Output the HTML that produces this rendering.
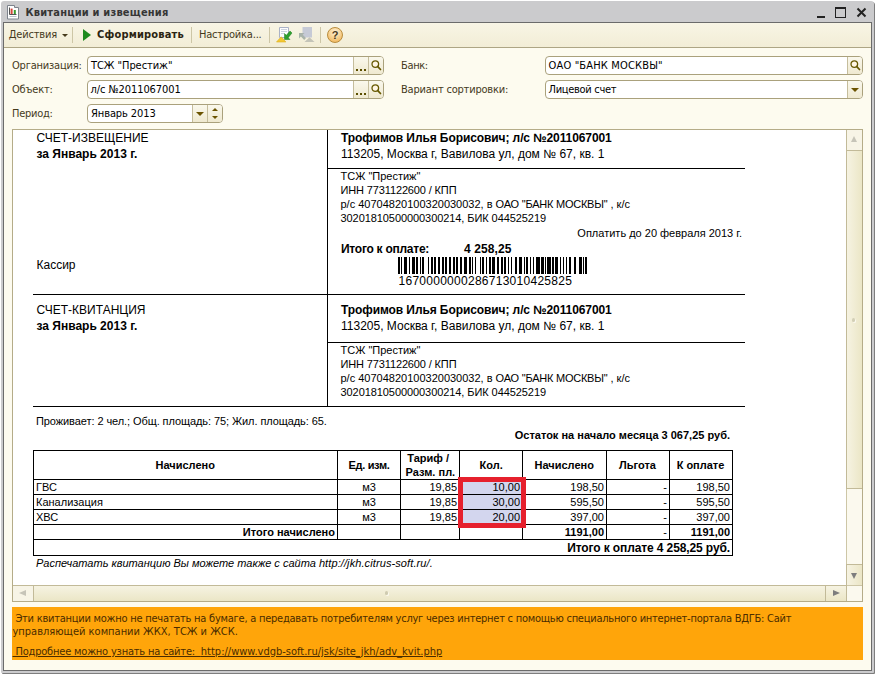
<!DOCTYPE html>
<html lang="ru"><head><meta charset="utf-8"><title>Квитанции и извещения</title>
<style>
*{box-sizing:border-box;margin:0;padding:0}
html,body{width:875px;height:674px;background:#fff;overflow:hidden}
body{position:relative;font-family:"Liberation Sans","DejaVu Sans",sans-serif;font-size:11px;color:#000}
.abs,.win *{position:absolute}
.win{position:absolute;left:1px;top:1px;width:873px;height:672px;background:#cbcbcd;border-radius:3px 3px 1px 1px;box-shadow:1px 1px 0 #7e7e7e}
.inner{left:2px;top:21px;width:869px;height:649px;border:1px solid #6b6b6b;background:#fdfbef}
.title{left:24.500px;top:5px;font-weight:bold;font-size:11px;line-height:14px;color:#363636;white-space:nowrap;letter-spacing:.19px}
.tb{left:0;top:0;width:867px;height:25px;background:linear-gradient(#f8f5e5,#f2edd6);border-bottom:1px solid #ada584}
.ui,.title,.inp .v{font-family:"DejaVu Sans Condensed","Liberation Sans",sans-serif}
.ui{font-size:11px;line-height:14px;color:#453a1c;white-space:nowrap;letter-spacing:-.2px}
.sep{width:1px;background:#cdc6a6;top:4px;height:16px}
.inp{height:19px;border:1px solid #aaa17c;border-radius:4px;background:#fff;overflow:hidden}
.inp .v{left:3px;top:2px;font-size:11px;line-height:14px;color:#000;white-space:nowrap}
.btn{top:0;height:17px;width:15px;border-left:1px solid #c5bd9c;background:linear-gradient(#faf8ec,#efe9d0)}
.doc{left:8px;top:106px;width:851px;height:473px;border:1px solid #b5ac88;background:#fff;overflow:hidden}
.d{white-space:nowrap;color:#000;font-size:12px;line-height:14px}
.s{font-size:11px;line-height:13px}
.b{font-weight:bold}
.ln{background:#000}
.r{text-align:right}
.c{text-align:center}
</style></head><body>
<div class="win">
 <svg style="left:6px;top:4px" width="13" height="15" viewBox="0 0 13 15"><path d="M.5.5h7v2h4v11.5h-11z" fill="#fff" stroke="#7d838c"/><path d="M2.5 2.5v7h7" fill="none" stroke="#555"/><rect x="3.6" y="3.6" width="2" height="5.4" fill="#d4463a"/><rect x="6.8" y="5" width="2" height="4" fill="#3a9a2e"/><path d="M2.5 11.5h7" stroke="#b8c0c8"/></svg>
 <div class="title">Квитанции и извещения</div>
 <div class="ln" style="left:816px;top:15px;width:8px;height:2px;background:#222"></div>
 <div style="left:834px;top:6px;width:11px;height:11px;border:1px solid #222;border-top-width:2px"></div>
 <svg style="left:855px;top:6px" width="11" height="11" viewBox="0 0 11 11"><path d="M1.5 1.5l8 8M9.500 1.5l-8 8" stroke="#222" stroke-width="2"/></svg>
 <div class="inner">
  <div class="tb">
   <div class="ui" style="left:4.700px;top:5px;letter-spacing:-.16px">Действия</div>
   <div style="left:58px;top:11px;border:3px solid transparent;border-top:3px solid #453a1c;border-bottom:0"></div>
   <div class="sep" style="left:68px"></div>
   <div style="left:79px;top:6px;border:6px solid transparent;border-left:8px solid #1e8a1e;border-right:0"></div>
   <div class="ui b" style="left:93px;top:5px;color:#2b2412;letter-spacing:.17px">Сформировать</div>
   <div class="sep" style="left:187px"></div>
   <div class="ui" style="left:195px;top:5px">Настройка...</div>
   <div class="sep" style="left:265px"></div>
   <svg style="left:272px;top:3px" width="18" height="18" viewBox="0 0 18 18"><path d="M3.5 1.500h9v10h-9z" fill="#fdfdfe" stroke="#aab2c6"/><path d="M5 3.500h6M5 5.500h6M5 7.500h3" stroke="#ccd3e0"/><path d="M8.500 13.500V7.500l1.800 1.800L14 5l2 2-3.800 4.700 1.800 1.800z" fill="#2fa02f" stroke="#1c7d1c" stroke-width=".5"/><path d="M0.500 16l4.700-5.200 4.700 5.200z" fill="#f4c832" stroke="#dcae20" stroke-width=".6"/></svg>
   <svg style="left:294px;top:3px" width="18" height="18" viewBox="0 0 18 18"><path d="M4.500 1h9.500v10.500h-9.500z" fill="#c6cad6"/><path d="M1 7h5.500l-1.800 1.800 3.300 3.300-1.800 1.800-3.300-3.300-1.900 1.900z" fill="#a9b3aa"/><path d="M6.500 16l5-4.800 5 4.800z" fill="#c4c4b8"/></svg>
   <div class="sep" style="left:316px"></div>
   <div style="left:323px;top:4px;width:16px;height:16px;border-radius:8px;border:1px solid #b98c3c;background:radial-gradient(circle at 50% 30%,#fff3d8,#f3bf6c 75%)"></div>
   <div style="left:323px;top:4px;width:16px;height:16px;text-align:center;font-weight:bold;font-size:11px;line-height:16px;color:#4a3a20">?</div>
  </div>

  <div class="ui" style="left:8px;top:36px">Организация:</div>
  <div class="inp" style="left:83px;top:33px;width:297px"><div class="v" style="letter-spacing:-.06px">ТСЖ "Престиж"</div>
    <div class="btn" style="left:265px"><i style="left:2px;top:12px;width:2px;height:2px;background:#5b4e00"></i><i style="left:6px;top:12px;width:2px;height:2px;background:#5b4e00"></i><i style="left:10px;top:12px;width:2px;height:2px;background:#5b4e00"></i></div>
    <div class="btn" style="left:280px"><svg style="left:1px;top:2px" width="13" height="13" viewBox="0 0 13 13"><circle cx="5.300" cy="5.100" r="3.300" fill="#fff6e4" stroke="#665800" stroke-width="1.300"/><path d="M7.800 7.700l2.700 2.800" stroke="#665800" stroke-width="1.700" stroke-linecap="round"/></svg></div>
  </div>
  <div class="ui" style="left:8px;top:60px">Объект:</div>
  <div class="inp" style="left:83px;top:57px;width:297px"><div class="v" style="letter-spacing:-.09px;left:2.500px">л/с №2011067001</div>
    <div class="btn" style="left:265px"><i style="left:2px;top:12px;width:2px;height:2px;background:#5b4e00"></i><i style="left:6px;top:12px;width:2px;height:2px;background:#5b4e00"></i><i style="left:10px;top:12px;width:2px;height:2px;background:#5b4e00"></i></div>
    <div class="btn" style="left:280px"><svg style="left:1px;top:2px" width="13" height="13" viewBox="0 0 13 13"><circle cx="5.300" cy="5.100" r="3.300" fill="#fff6e4" stroke="#665800" stroke-width="1.300"/><path d="M7.800 7.700l2.700 2.800" stroke="#665800" stroke-width="1.700" stroke-linecap="round"/></svg></div>
  </div>
  <div class="ui" style="left:8px;top:84px;letter-spacing:-.28px">Период:</div>
  <div class="inp" style="left:83px;top:81px;width:136px"><div class="v" style="letter-spacing:-.1px">Январь 2013</div>
    <div class="btn" style="left:104px"><i style="left:3px;top:7px;border:4px solid transparent;border-top:4px solid #6b5300;border-bottom:0"></i></div>
    <div class="btn" style="left:119px"><i style="left:4px;top:3px;border:3px solid transparent;border-bottom:3px solid #6b5300;border-top:0"></i><i style="left:4px;top:11px;border:3px solid transparent;border-top:3px solid #6b5300;border-bottom:0"></i></div>
  </div>

  <div class="ui" style="left:397px;top:36px;letter-spacing:-.36px">Банк:</div>
  <div class="inp" style="left:541px;top:33px;width:318px"><div class="v" style="letter-spacing:.16px;left:2.500px">ОАО "БАНК МОСКВЫ"</div>
    <div class="btn" style="left:301px"><svg style="left:1px;top:2px" width="13" height="13" viewBox="0 0 13 13"><circle cx="5.300" cy="5.100" r="3.300" fill="#fff6e4" stroke="#665800" stroke-width="1.300"/><path d="M7.800 7.700l2.700 2.800" stroke="#665800" stroke-width="1.700" stroke-linecap="round"/></svg></div>
  </div>
  <div class="ui" style="left:397px;top:60px">Вариант сортировки:</div>
  <div class="inp" style="left:541px;top:57px;width:318px"><div class="v" style="letter-spacing:-.29px;left:2.500px">Лицевой счет</div>
    <div class="btn" style="left:301px"><i style="left:3px;top:7px;border:4px solid transparent;border-top:4px solid #6b5300;border-bottom:0"></i></div>
  </div>

  <div class="doc">
   <div class="ln" style="left:314px;top:0px;width:1px;height:277px;background:#000"></div>
<div class="ln" style="left:314px;top:38px;width:418px;height:1px;background:#000"></div>
<div class="ln" style="left:20px;top:164px;width:712px;height:1px;background:#000"></div>
<div class="ln" style="left:314px;top:212px;width:418px;height:1px;background:#000"></div>
<div class="ln" style="left:20px;top:276px;width:712px;height:1px;background:#000"></div>
<div class="d" style="top:0.84px;font-size:12px;line-height:14px;left:23.50px;">СЧЕТ-ИЗВЕЩЕНИЕ</div>
<div class="d" style="top:16.84px;font-size:12px;line-height:14px;font-weight:bold;left:23.50px;">за Январь 2013 г.</div>
<div class="d" style="top:127.84px;font-size:12px;line-height:14px;left:23.50px;">Кассир</div>
<div class="d" style="top:0.84px;font-size:12px;line-height:14px;font-weight:bold;left:328.00px;letter-spacing:-.09px;">Трофимов Илья Борисович; л/с №2011067001</div>
<div class="d" style="top:16.84px;font-size:12px;line-height:14px;left:328.00px;">113205, Москва г, Вавилова ул, дом № 67, кв. 1</div>
<div class="d" style="top:39.69px;font-size:11px;line-height:13px;left:327.50px;">ТСЖ "Престиж"</div>
<div class="d" style="top:53.69px;font-size:11px;line-height:13px;left:327.50px;letter-spacing:-.135px;">ИНН 7731122600 / КПП</div>
<div class="d" style="top:67.69px;font-size:11px;line-height:13px;left:327.50px;">р/с 40704820100320030032, в <span style="position:static;letter-spacing:-.23px">ОАО "БАНК МОСКВЫ"</span> , к/с</div>
<div class="d" style="top:81.69px;font-size:11px;line-height:13px;left:327.50px;letter-spacing:-.075px;">30201810500000300214, БИК 044525219</div>
<div class="d" style="top:96.69px;font-size:11px;line-height:13px;right:120.00px;text-align:right;">Оплатить до 20 февраля 2013 г.</div>
<div class="d" style="top:111.84px;font-size:12px;line-height:14px;font-weight:bold;left:328.00px;letter-spacing:-.26px;">Итого к оплате:</div>
<div class="d" style="top:111.84px;font-size:12px;line-height:14px;font-weight:bold;left:451.00px;letter-spacing:.1px;">4 258,25</div>
<svg style="left:385px;top:127px" width="189" height="17" viewBox="0 0 189 18" preserveAspectRatio="none"><path fill="#000" d="M0 0h2v18h-2zM3 0h1v18h-1zM6 0h3v18h-3zM11 0h1v18h-1zM14 0h3v18h-3zM18 0h2v18h-2zM22 0h1v18h-1zM24 0h2v18h-2zM30 0h1v18h-1zM33 0h2v18h-2zM36 0h2v18h-2zM40 0h2v18h-2zM44 0h2v18h-2zM47 0h2v18h-2zM51 0h2v18h-2zM55 0h2v18h-2zM58 0h2v18h-2zM62 0h2v18h-2zM66 0h3v18h-3zM71 0h2v18h-2zM74 0h1v18h-1zM77 0h1v18h-1zM82 0h1v18h-1zM84 0h2v18h-2zM88 0h1v18h-1zM91 0h2v18h-2zM94 0h3v18h-3zM99 0h2v18h-2zM103 0h2v18h-2zM106 0h2v18h-2zM110 0h1v18h-1zM113 0h1v18h-1zM117 0h2v18h-2zM121 0h3v18h-3zM126 0h1v18h-1zM128 0h2v18h-2zM132 0h1v18h-1zM135 0h1v18h-1zM138 0h4v18h-4zM143 0h3v18h-3zM147 0h1v18h-1zM149 0h4v18h-4zM154 0h2v18h-2zM157 0h3v18h-3zM162 0h1v18h-1zM165 0h1v18h-1zM168 0h1v18h-1zM171 0h2v18h-2zM176 0h2v18h-2zM181 0h3v18h-3zM185 0h1v18h-1zM187 0h2v18h-2z"/></svg>
<div class="d" style="top:143.84px;font-size:12px;line-height:14px;left:385.50px;letter-spacing:.27px;">1670000000286713010425825</div>
<div class="d" style="top:172.84px;font-size:12px;line-height:14px;left:23.50px;">СЧЕТ-КВИТАНЦИЯ</div>
<div class="d" style="top:188.84px;font-size:12px;line-height:14px;font-weight:bold;left:23.50px;">за Январь 2013 г.</div>
<div class="d" style="top:172.84px;font-size:12px;line-height:14px;font-weight:bold;left:328.00px;letter-spacing:-.09px;">Трофимов Илья Борисович; л/с №2011067001</div>
<div class="d" style="top:188.84px;font-size:12px;line-height:14px;left:328.00px;">113205, Москва г, Вавилова ул, дом № 67, кв. 1</div>
<div class="d" style="top:213.69px;font-size:11px;line-height:13px;left:327.50px;">ТСЖ "Престиж"</div>
<div class="d" style="top:227.69px;font-size:11px;line-height:13px;left:327.50px;letter-spacing:-.135px;">ИНН 7731122600 / КПП</div>
<div class="d" style="top:241.69px;font-size:11px;line-height:13px;left:327.50px;">р/с 40704820100320030032, в <span style="position:static;letter-spacing:-.23px">ОАО "БАНК МОСКВЫ"</span> , к/с</div>
<div class="d" style="top:255.69px;font-size:11px;line-height:13px;left:327.50px;letter-spacing:-.075px;">30201810500000300214, БИК 044525219</div>
<div class="d" style="top:284.69px;font-size:11px;line-height:13px;left:23.00px;letter-spacing:-.08px;">Проживает: 2 чел.; Общ. площадь: 75; Жил. площадь: 65.</div>
<div class="d" style="top:298.69px;font-size:11px;line-height:13px;font-weight:bold;right:132.00px;text-align:right;">Остаток на начало месяца 3 067,25 руб.</div>
<div style="left:447px;top:350px;width:62px;height:44px;background:#d3d6ee"></div>
<div class="ln" style="left:20px;top:320px;width:700px;height:1px;background:#000"></div>
<div class="ln" style="left:20px;top:349px;width:700px;height:1px;background:#000"></div>
<div class="ln" style="left:20px;top:364px;width:700px;height:1px;background:#000"></div>
<div class="ln" style="left:20px;top:379px;width:700px;height:1px;background:#000"></div>
<div class="ln" style="left:20px;top:394px;width:700px;height:1px;background:#000"></div>
<div class="ln" style="left:20px;top:409px;width:700px;height:1px;background:#000"></div>
<div class="ln" style="left:20px;top:425px;width:700px;height:1px;background:#000"></div>
<div class="ln" style="left:20px;top:320px;width:1px;height:106px;background:#000"></div>
<div class="ln" style="left:324px;top:320px;width:1px;height:90px;background:#000"></div>
<div class="ln" style="left:387px;top:320px;width:1px;height:90px;background:#000"></div>
<div class="ln" style="left:446px;top:320px;width:1px;height:90px;background:#000"></div>
<div class="ln" style="left:509px;top:320px;width:1px;height:90px;background:#000"></div>
<div class="ln" style="left:593px;top:320px;width:1px;height:90px;background:#000"></div>
<div class="ln" style="left:656px;top:320px;width:1px;height:90px;background:#000"></div>
<div class="ln" style="left:719px;top:320px;width:1px;height:106px;background:#000"></div>
<div style="left:445px;top:347px;width:68px;height:51px;border:5px solid #e6202d"></div>
<div class="d" style="top:328.69px;font-size:11px;line-height:13px;font-weight:bold;left:72.20px;width:200px;text-align:center;">Начислено</div>
<div class="d" style="top:328.69px;font-size:11px;line-height:13px;font-weight:bold;left:256.00px;width:200px;text-align:center;letter-spacing:-.3px;">Ед. изм.</div>
<div class="d" style="top:321.69px;font-size:11px;line-height:13px;font-weight:bold;left:315.20px;width:200px;text-align:center;">Тариф /</div>
<div class="d" style="top:335.69px;font-size:11px;line-height:13px;font-weight:bold;left:317.40px;width:200px;text-align:center;">Разм. пл.</div>
<div class="d" style="top:328.69px;font-size:11px;line-height:13px;font-weight:bold;left:378.20px;width:200px;text-align:center;">Кол.</div>
<div class="d" style="top:328.69px;font-size:11px;line-height:13px;font-weight:bold;left:451.20px;width:200px;text-align:center;">Начислено</div>
<div class="d" style="top:328.69px;font-size:11px;line-height:13px;font-weight:bold;left:524.50px;width:200px;text-align:center;">Льгота</div>
<div class="d" style="top:328.69px;font-size:11px;line-height:13px;font-weight:bold;left:587.50px;width:200px;text-align:center;">К оплате</div>
<div class="d" style="top:350.69px;font-size:11px;line-height:13px;left:23.00px;">ГВС</div>
<div class="d" style="top:350.69px;font-size:11px;line-height:13px;left:256.00px;width:200px;text-align:center;">м3</div>
<div class="d" style="top:350.69px;font-size:11px;line-height:13px;right:405.00px;text-align:right;">19,85</div>
<div class="d" style="top:350.69px;font-size:11px;line-height:13px;right:342.00px;text-align:right;">10,00</div>
<div class="d" style="top:350.69px;font-size:11px;line-height:13px;right:258.00px;text-align:right;">198,50</div>
<div class="d" style="top:350.69px;font-size:11px;line-height:13px;right:195.00px;text-align:right;">-</div>
<div class="d" style="top:350.69px;font-size:11px;line-height:13px;right:132.00px;text-align:right;">198,50</div>
<div class="d" style="top:365.69px;font-size:11px;line-height:13px;left:23.00px;">Канализация</div>
<div class="d" style="top:365.69px;font-size:11px;line-height:13px;left:256.00px;width:200px;text-align:center;">м3</div>
<div class="d" style="top:365.69px;font-size:11px;line-height:13px;right:405.00px;text-align:right;">19,85</div>
<div class="d" style="top:365.69px;font-size:11px;line-height:13px;right:342.00px;text-align:right;">30,00</div>
<div class="d" style="top:365.69px;font-size:11px;line-height:13px;right:258.00px;text-align:right;">595,50</div>
<div class="d" style="top:365.69px;font-size:11px;line-height:13px;right:195.00px;text-align:right;">-</div>
<div class="d" style="top:365.69px;font-size:11px;line-height:13px;right:132.00px;text-align:right;">595,50</div>
<div class="d" style="top:380.69px;font-size:11px;line-height:13px;left:23.00px;">ХВС</div>
<div class="d" style="top:380.69px;font-size:11px;line-height:13px;left:256.00px;width:200px;text-align:center;">м3</div>
<div class="d" style="top:380.69px;font-size:11px;line-height:13px;right:405.00px;text-align:right;">19,85</div>
<div class="d" style="top:380.69px;font-size:11px;line-height:13px;right:342.00px;text-align:right;">20,00</div>
<div class="d" style="top:380.69px;font-size:11px;line-height:13px;right:258.00px;text-align:right;">397,00</div>
<div class="d" style="top:380.69px;font-size:11px;line-height:13px;right:195.00px;text-align:right;">-</div>
<div class="d" style="top:380.69px;font-size:11px;line-height:13px;right:132.00px;text-align:right;">397,00</div>
<div class="d" style="top:395.69px;font-size:11px;line-height:13px;font-weight:bold;right:527.00px;text-align:right;">Итого начислено</div>
<div class="d" style="top:395.69px;font-size:11px;line-height:13px;font-weight:bold;right:258.00px;text-align:right;">1191,00</div>
<div class="d" style="top:395.69px;font-size:11px;line-height:13px;right:195.00px;text-align:right;">-</div>
<div class="d" style="top:395.69px;font-size:11px;line-height:13px;font-weight:bold;right:132.00px;text-align:right;">1191,00</div>
<div class="d" style="top:410.84px;font-size:12px;line-height:14px;font-weight:bold;right:132.00px;text-align:right;letter-spacing:-.11px;">Итого к оплате 4 258,25 руб.</div>
<div class="d" style="top:426.69px;font-size:11px;line-height:13px;font-style:italic;left:23.00px;">Распечатать квитанцию Вы можете также с сайта <span style="position:static;letter-spacing:.1px">http://jkh.citrus-soft.ru/.</span></div>

<div style="left:833px;top:0;width:16px;height:455px;background:#fbf9ee;border-left:1px solid #cdc6a6"></div>
<div style="left:833px;top:0;width:16px;height:21px;background:#f7f4e6;border-left:1px solid #c2ba98;border-bottom:1px solid #c2ba98"></div>
<div style="left:838px;top:6px;border:3.500px solid transparent;border-bottom:6.500px solid #c6c4b8;border-top:0"></div>
<div style="left:833px;top:21px;width:16px;height:338px;background:linear-gradient(90deg,#f6f3e2,#ebe6c6);border-left:1px solid #c2ba98;border-bottom:1px solid #c2ba98"></div>
<div style="left:833px;top:434px;width:16px;height:21px;background:linear-gradient(90deg,#f6f3e2,#ebe6c6);border-left:1px solid #c2ba98;border-top:1px solid #c2ba98"></div>
<div style="left:837.500px;top:442.500px;border:3.500px solid transparent;border-top:6.500px solid #7d7d7d;border-bottom:0"></div>
<div style="left:0;top:455px;width:849px;height:16px;background:#fbf9ee;border-top:1px solid #cdc6a6"></div>
<div style="left:0;top:455px;width:21px;height:16px;background:#f7f4e6;border-top:1px solid #c2ba98;border-right:1px solid #c2ba98"></div>
<div style="left:6px;top:459.500px;border:3.500px solid transparent;border-right:7px solid #c6c4b8;border-left:0"></div>
<div style="left:21px;top:455px;width:792px;height:16px;background:linear-gradient(#f6f3e2,#ebe6c6);border-top:1px solid #c2ba98;border-right:1px solid #c2ba98"></div>
<div style="left:813px;top:455px;width:21px;height:16px;background:linear-gradient(#f6f3e2,#ebe6c6);border-top:1px solid #c2ba98;border-right:1px solid #c2ba98"></div>
<div style="left:820px;top:460px;border:3.500px solid transparent;border-left:7px solid #7d7d7d;border-right:0"></div>
<div style="left:834px;top:456px;width:15px;height:15px;background:#fbf9ee"></div>
<div style="left:372px;top:461px;width:3px;height:4px;border-radius:1.500px;background:#cfcbb0;box-shadow:1px 1px 0 #fbf9ee"></div>
<div style="left:839px;top:188px;width:3px;height:4px;border-radius:1.500px;background:#d3cfb6;box-shadow:1px 1px 0 #fbf9ee"></div>

  </div>

  <div style="left:8px;top:584px;width:851px;height:53px;background:#ffa50a"></div>
  <div class="ui" style="left:8.500px;top:589px;color:#4a2c00;line-height:13px;white-space:normal;width:845px;letter-spacing:-.24px">&nbsp;Эти квитанции можно не печатать на бумаге, а передавать потребителям услуг через интернет с помощью специального интернет-портала ВДГБ: Сайт<br><span style="position:static;letter-spacing:0">управляющей компании ЖКХ, ТСЖ и ЖСК.</span></div>
  <div class="ui" style="left:8.500px;top:622px;color:#4a2c00;line-height:13px;text-decoration:underline">&nbsp;Подробнее можно узнать на сайте:&nbsp; <span style="position:static;letter-spacing:0">http://www.vdgb-soft.ru/jsk/site_jkh/adv_kvit.php</span></div>
 </div>
</div>
</body></html>
